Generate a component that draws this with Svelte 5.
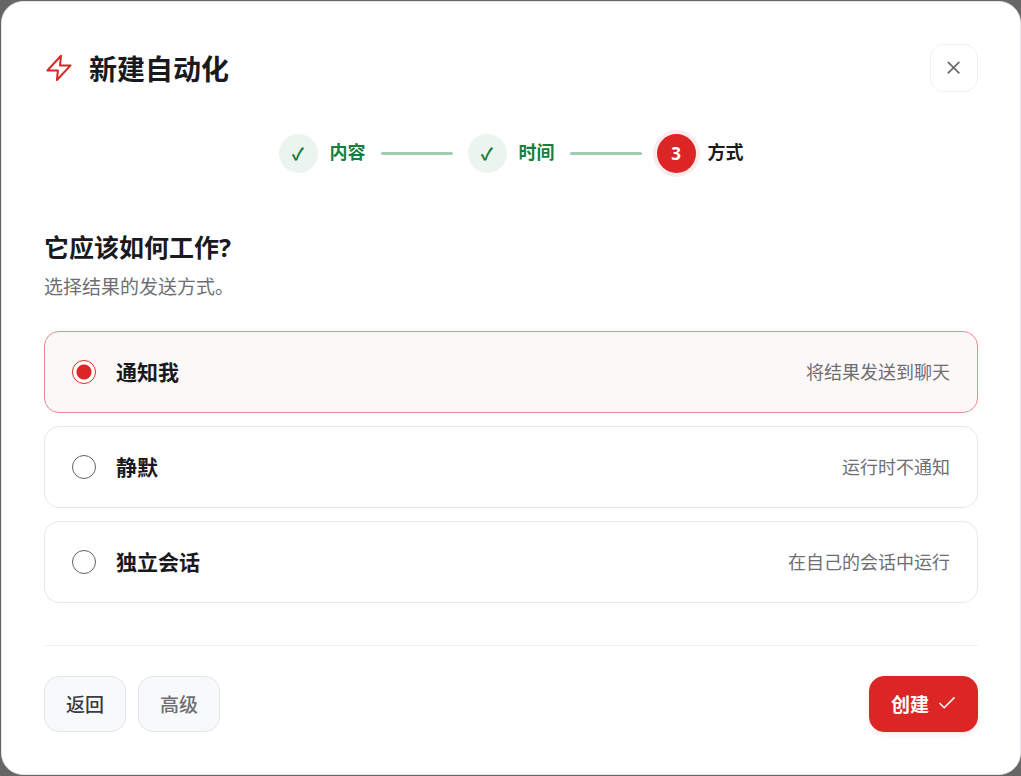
<script lang="ts">
  type Step = { id: number; label: string };
  type Mode = { value: string; title: string; hint: string };

  const steps: Step[] = [
    { id: 1, label: '内容' },
    { id: 2, label: '时间' },
    { id: 3, label: '方式' },
  ];

  const modes: Mode[] = [
    { value: 'notify', title: '通知我', hint: '将结果发送到聊天' },
    { value: 'silent', title: '静默', hint: '运行时不通知' },
    { value: 'session', title: '独立会话', hint: '在自己的会话中运行' },
  ];

  let current = $state(3);
  let mode = $state('notify');

  function goBack() {
    if (current > 1) current -= 1;
  }
</script>

<div class="dialog" role="dialog" aria-labelledby="dialog-title">
  <header class="header">
    <svg class="bolt" viewBox="0 0 30 30" aria-hidden="true">
      <path d="M17 2.8 L3.4 17.5 H13.9 L12.9 27 L26.6 12.4 H16 Z" />
    </svg>
    <h1 id="dialog-title">新建自动化</h1>
    <button class="close" type="button" aria-label="关闭">
      <svg viewBox="0 0 14 14" aria-hidden="true">
        <path d="M0.8 0.8 L12.4 12.4 M12.4 0.8 L0.8 12.4" />
      </svg>
    </button>
  </header>

  <ol class="steps">
    {#each steps as step (step.id)}
      <li class="step" class:done={step.id < current} class:active={step.id === current}>
        <span class="badge">{step.id < current ? '✓' : step.id}</span>
        <span class="step-label">{step.label}</span>
      </li>
      {#if step.id < steps.length}
        <li class="line" class:done={step.id < current} aria-hidden="true"></li>
      {/if}
    {/each}
  </ol>

  <section class="intro">
    <h2>它应该如何工作?</h2>
    <p>选择结果的发送方式。</p>
  </section>

  <div class="modes" role="radiogroup" aria-label="发送方式">
    {#each modes as m (m.value)}
      <label class="mode" class:selected={mode === m.value}>
        <input type="radio" name="mode" value={m.value} bind:group={mode} />
        <span class="mode-title">{m.title}</span>
        <span class="mode-hint">{m.hint}</span>
      </label>
    {/each}
  </div>

  <footer class="footer">
    <button class="btn" type="button" onclick={goBack}>返回</button>
    <button class="btn muted" type="button">高级</button>
    <button class="btn primary" type="button">
      创建
      <svg viewBox="0 0 18 18" aria-hidden="true">
        <path d="M1.5 8 L6.2 12.7 L16.5 2.4" />
      </svg>
    </button>
  </footer>
</div>

<style>
  :global(body) {
    background: #666666;
  }

  .dialog {
    margin: 1px 0 1px 1px;
    padding: 42px;
    background: #ffffff;
    border: 1px solid #e4e4e9;
    border-radius: 22px;
    font-family: 'Noto Sans', 'Noto Sans CJK SC', sans-serif;
    color: #1a1a1e;
  }

  .header {
    display: flex;
    align-items: center;
  }

  .bolt {
    width: 30px;
    height: 30px;
    fill: none;
    stroke: #dc2626;
    stroke-width: 2;
    stroke-linejoin: round;
  }

  h1 {
    flex: 1;
    margin: 0 0 0 15px;
    padding-top: 2px;
    font-size: 28px;
    line-height: 36px;
    font-weight: 700;
  }

  .close {
    display: grid;
    place-items: center;
    width: 48px;
    height: 48px;
    padding: 0;
    background: #ffffff;
    border: 1px solid #f0f0f2;
    border-radius: 14px;
    cursor: pointer;
  }

  .close svg {
    width: 14px;
    height: 14px;
    fill: none;
    stroke: #6b6b70;
    stroke-width: 1.7;
  }

  .steps {
    display: flex;
    align-items: center;
    justify-content: center;
    gap: 15px;
    margin: 42px 0 0;
    padding: 0;
    list-style: none;
  }

  .step {
    display: flex;
    align-items: center;
    gap: 12px;
  }

  .badge {
    display: grid;
    place-items: center;
    width: 39px;
    height: 39px;
    border-radius: 50%;
    background: #f4f4f6;
    font-size: 17px;
    line-height: 24px;
    font-weight: 700;
  }

  .step-label {
    padding-bottom: 3px;
    font-size: 18px;
    line-height: 28px;
    font-weight: 700;
  }

  .step.done {
    color: #15803d;
  }

  .step.done .badge {
    background: #ebf4ef;
  }

  .step.active .badge {
    background: #dc2626;
    color: #ffffff;
    box-shadow: 0 0 0 4px #fcebec;
  }

  .line {
    width: 72px;
    height: 3px;
    border-radius: 2px;
    background: #e4e4e9;
  }

  .line.done {
    background: #a1ccb1;
  }

  .intro {
    margin-top: 56px;
  }

  h2 {
    margin: 0;
    font-size: 25px;
    line-height: 36px;
    font-weight: 700;
  }

  p {
    margin: 8px 0 0;
    font-size: 19px;
    line-height: 28px;
    color: #6e6e73;
  }

  .modes {
    display: flex;
    flex-direction: column;
    gap: 13px;
    margin-top: 30px;
  }

  .mode {
    display: flex;
    align-items: center;
    padding: 25px 27px;
    border: 1px solid #e8e8eb;
    border-radius: 15px;
    cursor: pointer;
  }

  .mode.selected {
    background: #fdf8f8;
    border-color: #e58b90;
  }

  .mode input {
    appearance: none;
    width: 24px;
    height: 24px;
    margin: 0 20px 0 0;
    border: 1px solid #626266;
    border-radius: 50%;
    background: #ffffff;
  }

  .mode input:checked {
    border-color: #dc2626;
    background: radial-gradient(circle, #dc2626 7px, #ffffff 8px);
  }

  .mode-title {
    flex: 1;
    font-size: 21px;
    line-height: 30px;
    font-weight: 700;
  }

  .mode-hint {
    padding-bottom: 1px;
    font-size: 18px;
    line-height: 28px;
    color: #6e6e73;
  }

  .footer {
    display: flex;
    gap: 12px;
    margin-top: 42px;
    padding-top: 30px;
    border-top: 1px solid #f0f0f2;
  }

  .btn {
    display: flex;
    align-items: center;
    gap: 9px;
    height: 56px;
    padding: 0 21px;
    background: #f8f9fb;
    border: 1px solid #e4e4e9;
    border-radius: 15px;
    font-family: inherit;
    font-size: 19px;
    font-weight: 500;
    color: #3b3b40;
    cursor: pointer;
  }

  .btn.muted {
    color: #6e6e73;
  }

  .btn.primary {
    margin-left: auto;
    background: #dc2626;
    border-color: #dc2626;
    color: #ffffff;
    font-weight: 700;
    box-shadow: 0 2px 6px rgba(220, 38, 38, 0.12);
  }

  .btn.primary svg {
    width: 18px;
    height: 18px;
    fill: none;
    stroke: #ffffff;
    stroke-width: 1.5;
  }
</style>
